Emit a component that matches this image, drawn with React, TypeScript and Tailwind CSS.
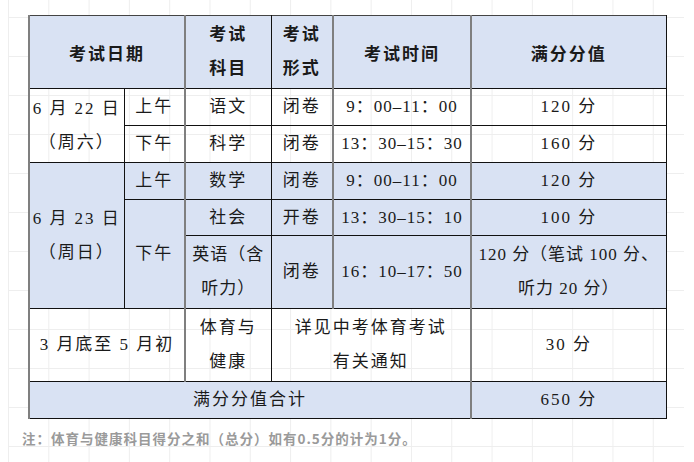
import React from 'react';

const G = 'border-l-2 border-l-[#7f7f7f]';

export default function App() {
  const td = 'border border-[#111] p-0 text-center align-middle whitespace-nowrap';
  const tm = 'tracking-[1px]';
  return (
    <div className="w-[694px] h-[462px] bg-white overflow-hidden [text-spacing-trim:space-all]">
      <div className="ml-[8px] w-[676px] h-full pt-[15px] bg-[linear-gradient(to_right,#eeeeee_1px,transparent_1px),linear-gradient(to_bottom,#eeeeee_1px,transparent_1px)] bg-[size:40.3px_39px] bg-[position:0_17px]">
        <table className="ml-[20px] table-fixed border-collapse w-[637px] text-[17px] leading-[34px] tracking-[2px] text-[#1a1a1a] font-['Liberation_Serif','Noto_Sans_CJK_SC',serif]">
          <colgroup>
            <col className="w-[95px]" />
            <col className="w-[61px]" />
            <col className="w-[86px]" />
            <col className="w-[62px]" />
            <col className="w-[138px]" />
            <col className="w-[195px]" />
          </colgroup>
          <tbody>
            <tr className="h-[73px] bg-[#d9e2f3] font-bold">
              <td colSpan={2} className={`${td} ${G} border-t-[#444] pt-[6px]`}>考试日期</td>
              <td className={`${td} ${G} border-t-[#444]`}>考试<br />科目</td>
              <td className={`${td} border-t-[#444]`}>考试<br />形式</td>
              <td className={`${td} ${G} border-t-[#444] pt-[6px]`}>考试时间</td>
              <td className={`${td} ${G} border-t-[#444] pt-[6px]`}>满分分值</td>
            </tr>
            <tr className="h-[37px]">
              <td rowSpan={2} className={`${td} ${G}`}>6 月 22 日<br />（周六）</td>
              <td className={td}>上午</td>
              <td className={`${td} ${G}`}>语文</td>
              <td className={td}>闭卷</td>
              <td className={`${td} ${G} ${tm}`}>9：00–11：00</td>
              <td className={`${td} ${G}`}>120 分</td>
            </tr>
            <tr className="h-[37px]">
              <td className={td}>下午</td>
              <td className={`${td} ${G}`}>科学</td>
              <td className={td}>闭卷</td>
              <td className={`${td} ${G} ${tm}`}>13：30–15：30</td>
              <td className={`${td} ${G}`}>160 分</td>
            </tr>
            <tr className="h-[37px] bg-[#d9e2f3]">
              <td rowSpan={3} className={`${td} ${G}`}>6 月 23 日<br />（周日）</td>
              <td className={td}>上午</td>
              <td className={`${td} ${G}`}>数学</td>
              <td className={td}>闭卷</td>
              <td className={`${td} ${G} ${tm}`}>9：00–11：00</td>
              <td className={`${td} ${G}`}>120 分</td>
            </tr>
            <tr className="h-[36px] bg-[#d9e2f3]">
              <td rowSpan={2} className={td}>下午</td>
              <td className={`${td} ${G}`}>社会</td>
              <td className={td}>开卷</td>
              <td className={`${td} ${G} ${tm}`}>13：30–15：10</td>
              <td className={`${td} ${G}`}>100 分</td>
            </tr>
            <tr className="h-[73px] bg-[#d9e2f3]">
              <td className={`${td} ${G} tracking-[1px]`}>英语（含<br />听力）</td>
              <td className={td}>闭卷</td>
              <td className={`${td} ${G} ${tm}`}>16：10–17：50</td>
              <td className={`${td} ${G} tracking-[1px]`}>120 分（笔试 100 分、<br />听力 20 分）</td>
            </tr>
            <tr className="h-[73px]">
              <td colSpan={2} className={`${td} ${G}`}>3 月底至 5 月初</td>
              <td className={`${td} ${G}`}>体育与<br />健康</td>
              <td colSpan={2} className={td}>详见中考体育考试<br />有关通知</td>
              <td className={`${td} ${G}`}>30 分</td>
            </tr>
            <tr className="h-[37px] bg-[#d9e2f3]">
              <td colSpan={5} className={`${td} ${G}`}>满分分值合计</td>
              <td className={`${td} ${G}`}>650 分</td>
            </tr>
          </tbody>
        </table>
        <p className="ml-[14px] mt-[11px] text-[13.5px] leading-[17px] tracking-[1px] font-bold text-[#9a9a9a] font-['Noto_Sans_CJK_SC','Noto_Sans',sans-serif]">
          注：体育与健康科目得分之和（总分）如有0.5分的计为1分。
        </p>
      </div>
    </div>
  );
}
